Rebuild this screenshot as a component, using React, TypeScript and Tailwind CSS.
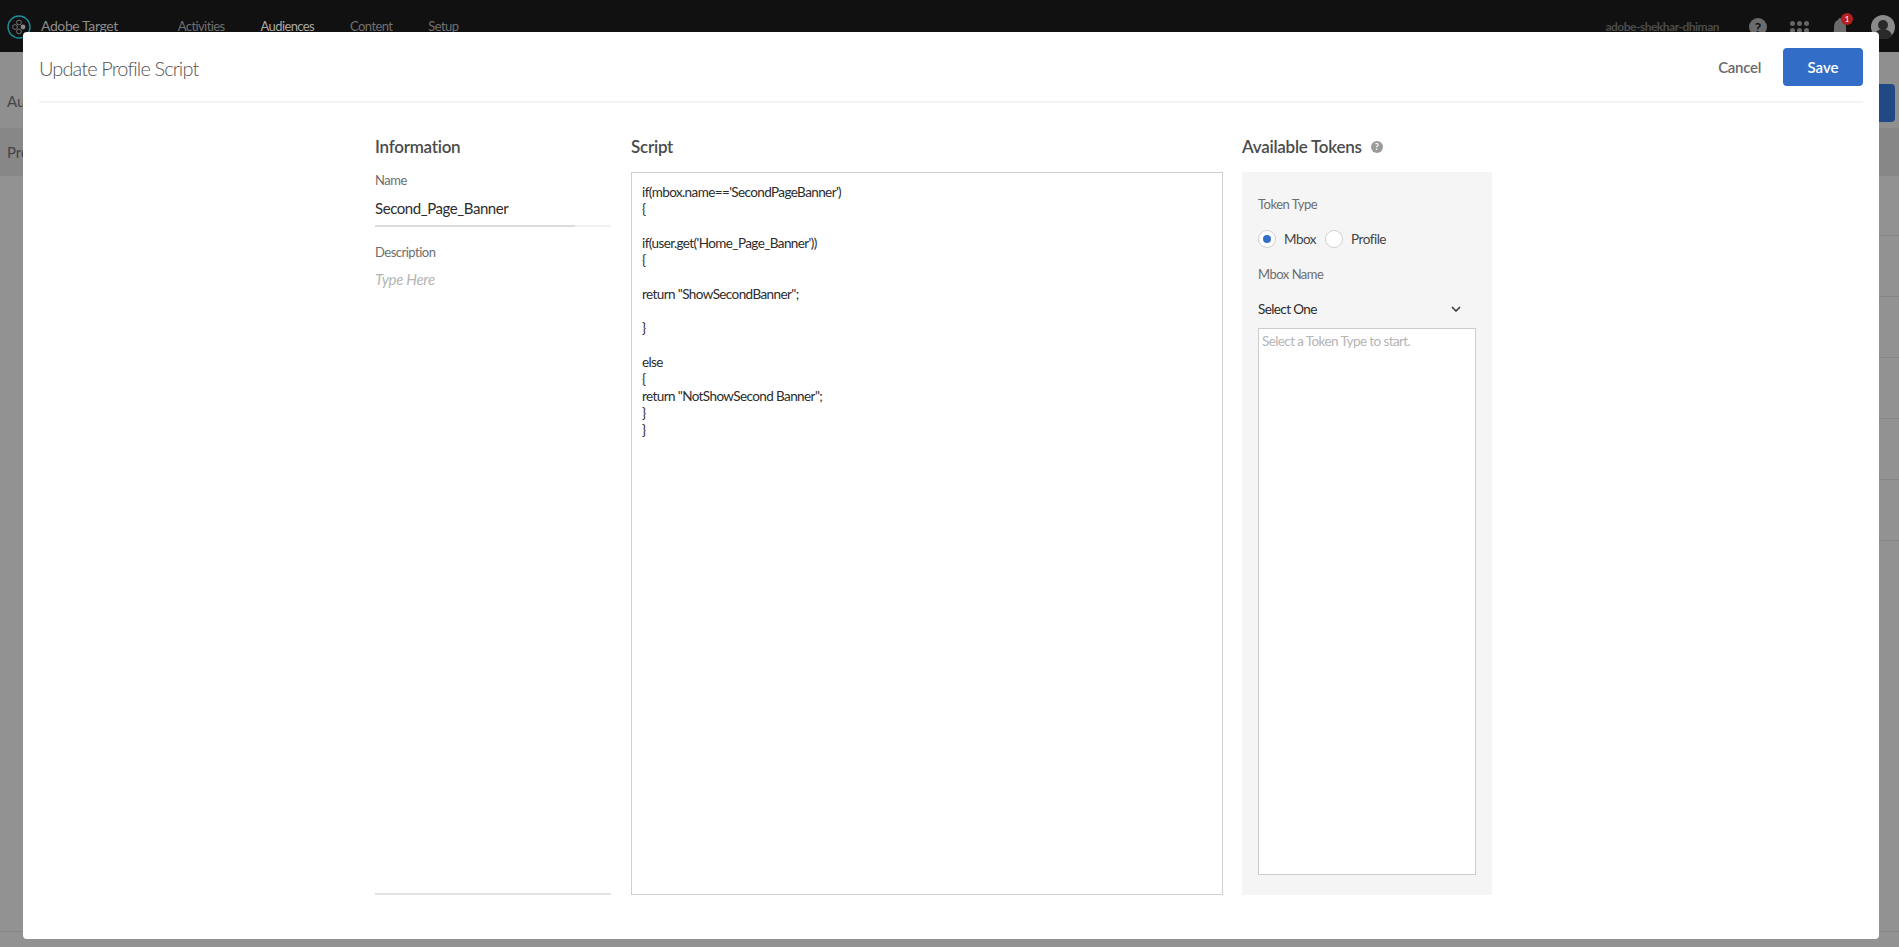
const scriptLines = [
  "if(mbox.name=='SecondPageBanner')",
  "{",
  "",
  "if(user.get('Home_Page_Banner'))",
  "{",
  "",
  'return "ShowSecondBanner";',
  "",
  "}",
  "",
  "else",
  "{",
  'return "NotShowSecond Banner";',
  "}",
  "}",
];

const navItems = ["Activities", "Audiences", "Content", "Setup"];

const Logo = () => (
  <svg width="24" height="24" viewBox="0 0 24 24" fill="none" className="shrink-0">
    <circle cx="12" cy="12" r="11" stroke="#1b8c99" strokeWidth="1.4" />
    <circle cx="8" cy="12" r="2.4" stroke="#8a8a8a" strokeWidth="0.8" />
    <circle cx="12" cy="7.5" r="2.4" stroke="#8a8a8a" strokeWidth="0.8" />
    <circle cx="12" cy="16.5" r="2.4" stroke="#8a8a8a" strokeWidth="0.8" />
    <circle cx="16" cy="12" r="2.4" fill="#8a8a8a" />
  </svg>
);

const Header = () => (
  <header className="h-[52px] bg-[#111111] flex items-start pt-[15px]">
    <div className="h-[24px] ml-[7px] flex items-center gap-[10px]">
      <Logo />
      <span className="text-[14px] leading-[18px] -mt-[2px] tracking-[-0.4px] text-[#8b8b8b]">Adobe Target</span>
    </div>
    <nav className="h-[24px] ml-[60px] flex items-center gap-[36px] text-[13px] tracking-[-0.6px] text-[#6f6f6f]">
      {navItems.map((item) => (
        <span key={item} className={item === "Audiences" ? "text-[#a8a8a8]" : ""}>
          {item}
        </span>
      ))}
    </nav>
    <div className="h-[24px] ml-auto mr-[4px] flex items-center">
      <span className="text-[12px] font-bold tracking-[-0.5px] text-[#4c4c4c] mr-[30px]">adobe-shekhar-dhiman</span>
      <span className="w-[18px] h-[18px] rounded-full bg-[#6b6b6b] text-[#111111] text-[14px] font-bold flex items-center justify-center mr-[23px]">
        ?
      </span>
      <div className="grid grid-cols-3 gap-[2px] mr-[22px]">
        {Array.from({ length: 6 }).map((_, i) => (
          <span key={i} className="w-[5px] h-[5px] rounded-full bg-[#666666]" />
        ))}
      </div>
      <div className="relative mr-[22px]">
        <svg width="18" height="22" viewBox="0 0 18 22" fill="#6a6a6a" className="block">
          <path d="M9 2c-1 0-2 1-2 2C4 5 3 8 3 11v4l-2 3h16l-2-3v-4c0-3-1-6-4-7 0-1-1-2-2-2z" />
        </svg>
        <span className="absolute -top-[3px] left-[10px] w-[12px] h-[12px] rounded-full bg-[#b3201f] text-white text-[8px] flex items-center justify-center">
          1
        </span>
      </div>
      <svg width="24" height="24" viewBox="0 0 24 24">
        <circle cx="12" cy="12" r="12" fill="#8a8a8a" />
        <circle cx="12" cy="10" r="5" fill="#2a2a2a" />
        <path d="M3 21c1-5 5-7 9-7s8 2 9 7a12 12 0 0 1-18 0z" fill="#2a2a2a" />
      </svg>
    </div>
  </header>
);

const Backdrop = () => (
  <div className="h-[895px] bg-[#929292] relative overflow-hidden text-[#444444] text-[15px]">
    <div className="h-[76px] flex items-center pl-[7px] pt-[22px] bg-[#8f8f8f]">Audiences</div>
    <div className="h-[48px] flex items-center pl-[7px] bg-[#878787]">Profile Scripts</div>
    <div className="absolute right-[4px] top-[32px] w-[40px] h-[38px] rounded-[4px] bg-[#1f4a85]" />
    <div className="absolute right-0 top-[183px] w-[20px]">
      {Array.from({ length: 6 }).map((_, i) => (
        <div key={i} className="h-[61px] border-t border-[#858585]" />
      ))}
    </div>
    <div className="absolute left-0 right-0 top-[879px] border-t border-[#858585]" />
  </div>
);

const Label = ({ children }: { children: React.ReactNode }) => (
  <div className="text-[13px] leading-[18px] tracking-[-0.5px] text-[#6e6e6e]">{children}</div>
);

const Heading = ({ children }: { children: React.ReactNode }) => (
  <h2 className="text-[17px] leading-[24px] font-semibold tracking-[-0.25px] text-[#4b4b4b]">{children}</h2>
);

const ProfileScriptModal = () => (
  <div className="absolute left-[23px] top-[32px] w-[1856px] h-[907px] bg-white rounded-[4px] flex flex-col px-[16px]">
    <div className="h-[71px] shrink-0 border-b-2 border-[#f3f3f3] flex items-start justify-between">
      <h1 className="mt-[25px] text-[20px] leading-[22px] font-light tracking-[-0.9px] text-[#555555]">Update Profile Script</h1>
      <div className="mt-[16px] flex items-center gap-[22px]">
        <span className="text-[15px] font-semibold tracking-[-0.3px] text-[#6a6a6a]">Cancel</span>
        <button className="w-[80px] h-[38px] rounded-[4px] bg-[#326ec8] text-white text-[15px] font-semibold">
          Save
        </button>
      </div>
    </div>
    <div className="flex mt-[32px] pl-[336px]">
      <section className="w-[236px] h-[760px] flex flex-col border-b-2 border-[#e3e3e3]">
        <Heading>Information</Heading>
        <div className="mt-[12px]">
          <Label>Name</Label>
        </div>
        <div className="mt-[9px] text-[15px] leading-[20px] tracking-[-0.43px] text-[#2c2c2c]">Second_Page_Banner</div>
        <div className="mt-[7px] h-[2px] bg-[#f0f0f0]">
          <div className="w-[200px] h-full bg-[#dddddd]" />
        </div>
        <div className="mt-[16px]">
          <Label>Description</Label>
        </div>
        <div className="mt-[8px] text-[15px] leading-[20px] italic tracking-[-0.3px] text-[#b5b5b5]">Type Here</div>
      </section>
      <section className="w-[592px] ml-[20px] flex flex-col">
        <Heading>Script</Heading>
        <div className="mt-[13px] h-[723px] border border-[#cfcfcf] pl-[10px] pt-[11px] text-[13.5px] leading-[17px] tracking-[-0.6px] text-[#2c2c2c]">
          {scriptLines.map((line, i) => (
            <div key={i} className="h-[17px]">
              {line}
            </div>
          ))}
        </div>
      </section>
      <section className="w-[250px] ml-[19px] flex flex-col">
        <div className="flex items-center gap-[9px]">
          <Heading>Available Tokens</Heading>
          <span className="w-[12px] h-[12px] rounded-full bg-[#9a9a9a] text-white text-[9px] font-bold flex items-center justify-center">
            ?
          </span>
        </div>
        <div className="mt-[13px] h-[723px] bg-[#f5f5f5] flex flex-col pl-[16px] pr-[16px] pt-[23px]">
          <Label>Token Type</Label>
          <div className="mt-[16px] flex items-center text-[13.5px] tracking-[-0.5px] text-[#444444]">
            <span className="w-[18px] h-[18px] rounded-full border border-[#d0d0d0] bg-white flex items-center justify-center">
              <span className="w-[8px] h-[8px] rounded-full bg-[#326ec8]" />
            </span>
            <span className="ml-[8px]">Mbox</span>
            <span className="ml-[9px] w-[18px] h-[18px] rounded-full border border-[#d0d0d0] bg-white" />
            <span className="ml-[8px]">Profile</span>
          </div>
          <div className="mt-[16px]">
            <Label>Mbox Name</Label>
          </div>
          <div className="mt-[17px] h-[18px] flex items-center justify-between text-[13.5px] tracking-[-0.6px] text-[#2c2c2c]">
            <span>Select One</span>
            <svg width="10" height="6" viewBox="0 0 10 6" fill="none" className="mr-[15px]" stroke="#333333" strokeWidth="1.5">
              <path d="M1 1l4 4 4-4" />
            </svg>
          </div>
          <div className="mt-[10px] h-[547px] bg-white border border-[#cccccc] pl-[3px] pt-[3px] text-[13.5px] leading-[18px] tracking-[-0.6px] text-[#b5b5b5]">
            Select a Token Type to start.
          </div>
        </div>
      </section>
    </div>
  </div>
);

export default function App() {
  return (
    <div className="relative h-[947px] overflow-hidden bg-[#8f8f8f] font-['Lato','Noto_Sans',sans-serif]">
      <Header />
      <Backdrop />
      <ProfileScriptModal />
    </div>
  );
}
